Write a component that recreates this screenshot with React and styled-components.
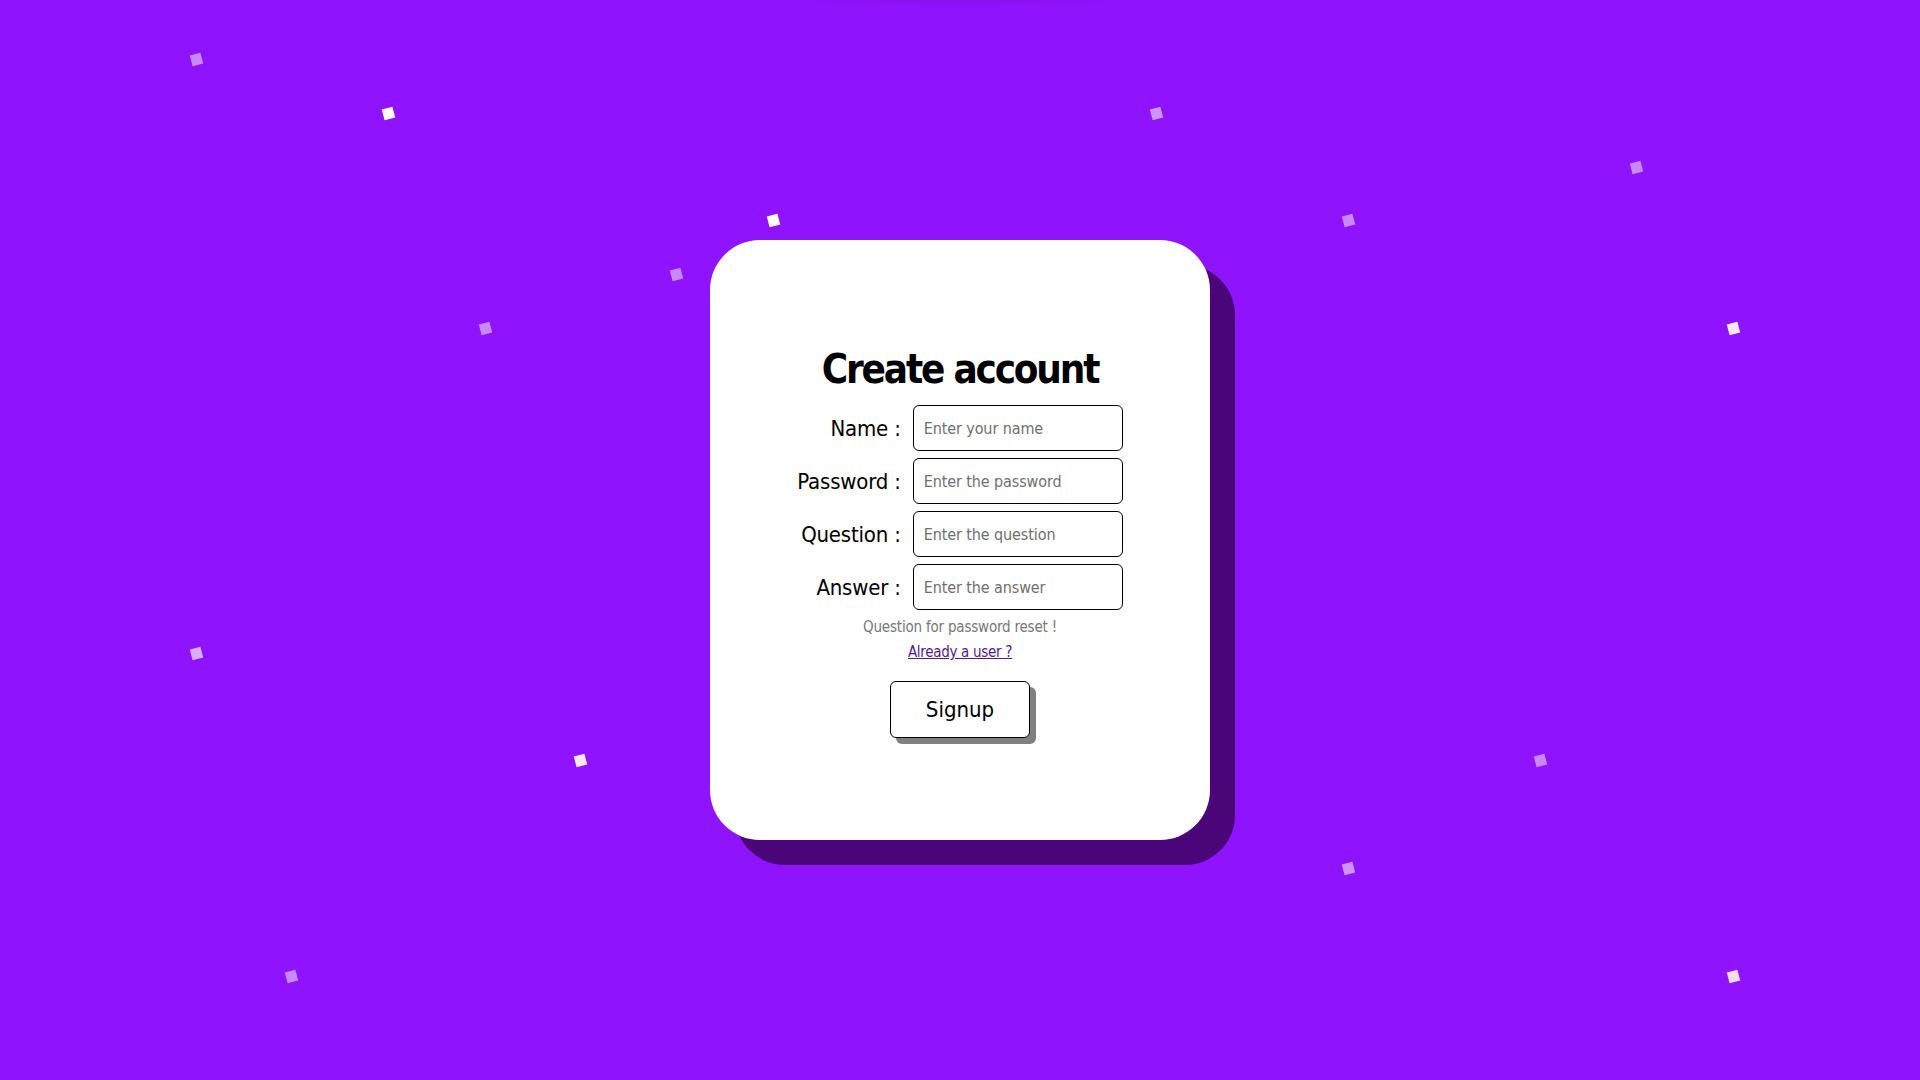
import React from 'react';
import styled, { createGlobalStyle } from 'styled-components';

const GlobalStyle = createGlobalStyle`
  html, body {
    margin: 0;
    padding: 0;
  }
  body {
    background: #9013fe;
    font-family: "DejaVu Sans Condensed", "DejaVu Sans", sans-serif;
    font-stretch: condensed;
  }
`;

const Page = styled.div`
  position: relative;
  width: 100vw;
  height: 100vh;
  overflow: hidden;
  display: flex;
  align-items: center;
  justify-content: center;
  background:
    radial-gradient(ellipse 180px 8px at 50% 0, rgba(0, 0, 0, 0.08), transparent),
    #9013fe;
`;

const Sparkle = styled.span`
  position: absolute;
  width: 11px;
  height: 11px;
  margin: -5px 0 0 -5px;
  background: #fff;
  opacity: ${(p) => p.$alpha};
  transform: rotate(-15deg);
`;

const Card = styled.div`
  position: relative;
  width: 500px;
  height: 600px;
  box-sizing: border-box;
  background: #fff;
  border-radius: 50px;
  box-shadow: 25px 25px 0 #4a0579;
  display: flex;
  flex-direction: column;
  align-items: center;
  justify-content: center;
  padding-top: 2px;
`;

const Title = styled.h1`
  margin: 0 0 11px;
  font-size: 40px;
  font-weight: bold;
  font-stretch: condensed;
  line-height: 1.25;
  color: #000;
  letter-spacing: -2.2px;
`;

const FormGrid = styled.div`
  display: grid;
  grid-template-columns: auto 210px;
  column-gap: 12px;
  row-gap: 7px;
  align-items: center;
`;

const Label = styled.label`
  text-align: right;
  font-size: 22px;
  font-stretch: condensed;
  color: #000;
  letter-spacing: -0.2px;
`;

const Input = styled.input`
  box-sizing: border-box;
  width: 210px;
  height: 46px;
  border: 1.5px solid #000;
  border-radius: 6px;
  padding: 0 10px;
  font-family: inherit;
  font-stretch: condensed;
  font-size: 16px;
  letter-spacing: -0.1px;
  outline: none;

  &::placeholder {
    color: #6f6f6f;
  }
`;

const Hint = styled.p`
  margin: 8px 0 0;
  font-size: 15px;
  letter-spacing: -0.2px;
  color: #777;
`;

const LoginLink = styled.a`
  margin-top: 7px;
  font-size: 15px;
  letter-spacing: -0.3px;
  color: #551a8b;
  text-decoration: underline;
  cursor: pointer;
`;

const SignupButton = styled.button`
  margin-top: 20px;
  width: 140px;
  height: 57px;
  background: #fff;
  border: 1.5px solid #000;
  border-radius: 6px;
  box-shadow: 6px 6px 0 #808080;
  font-family: inherit;
  font-stretch: condensed;
  font-size: 22px;
  color: #000;
  cursor: pointer;
`;

const sparkles = [
  [196, 59, 0.5],
  [388, 113, 1],
  [773, 220, 1],
  [676, 274, 0.5],
  [485, 328, 0.5],
  [1156, 113, 0.55],
  [1348, 220, 0.5],
  [1636, 167, 0.5],
  [1733, 328, 0.9],
  [196, 653, 0.65],
  [580, 760, 0.9],
  [1540, 760, 0.5],
  [1348, 868, 0.55],
  [291, 976, 0.5],
  [1733, 976, 0.85],
];

const fields = [
  ['Name', 'Enter your name', 'text'],
  ['Password', 'Enter the password', 'password'],
  ['Question', 'Enter the question', 'text'],
  ['Answer', 'Enter the answer', 'text'],
];

const App = () => {
  return (
    <>
      <GlobalStyle />
      <Page>
        {sparkles.map(([x, y, a], i) => (
          <Sparkle key={i} $alpha={a} style={{ left: x, top: y }} />
        ))}
        <Card>
          <Title>Create account</Title>
          <FormGrid>
            {fields.map(([label, ph, type]) => (
              <React.Fragment key={label}>
                <Label>{label} :</Label>
                <Input type={type} placeholder={ph} />
              </React.Fragment>
            ))}
          </FormGrid>
          <Hint>Question for password reset !</Hint>
          <LoginLink>Already a user ?</LoginLink>
          <SignupButton>Signup</SignupButton>
        </Card>
      </Page>
    </>
  );
};

export default App;
